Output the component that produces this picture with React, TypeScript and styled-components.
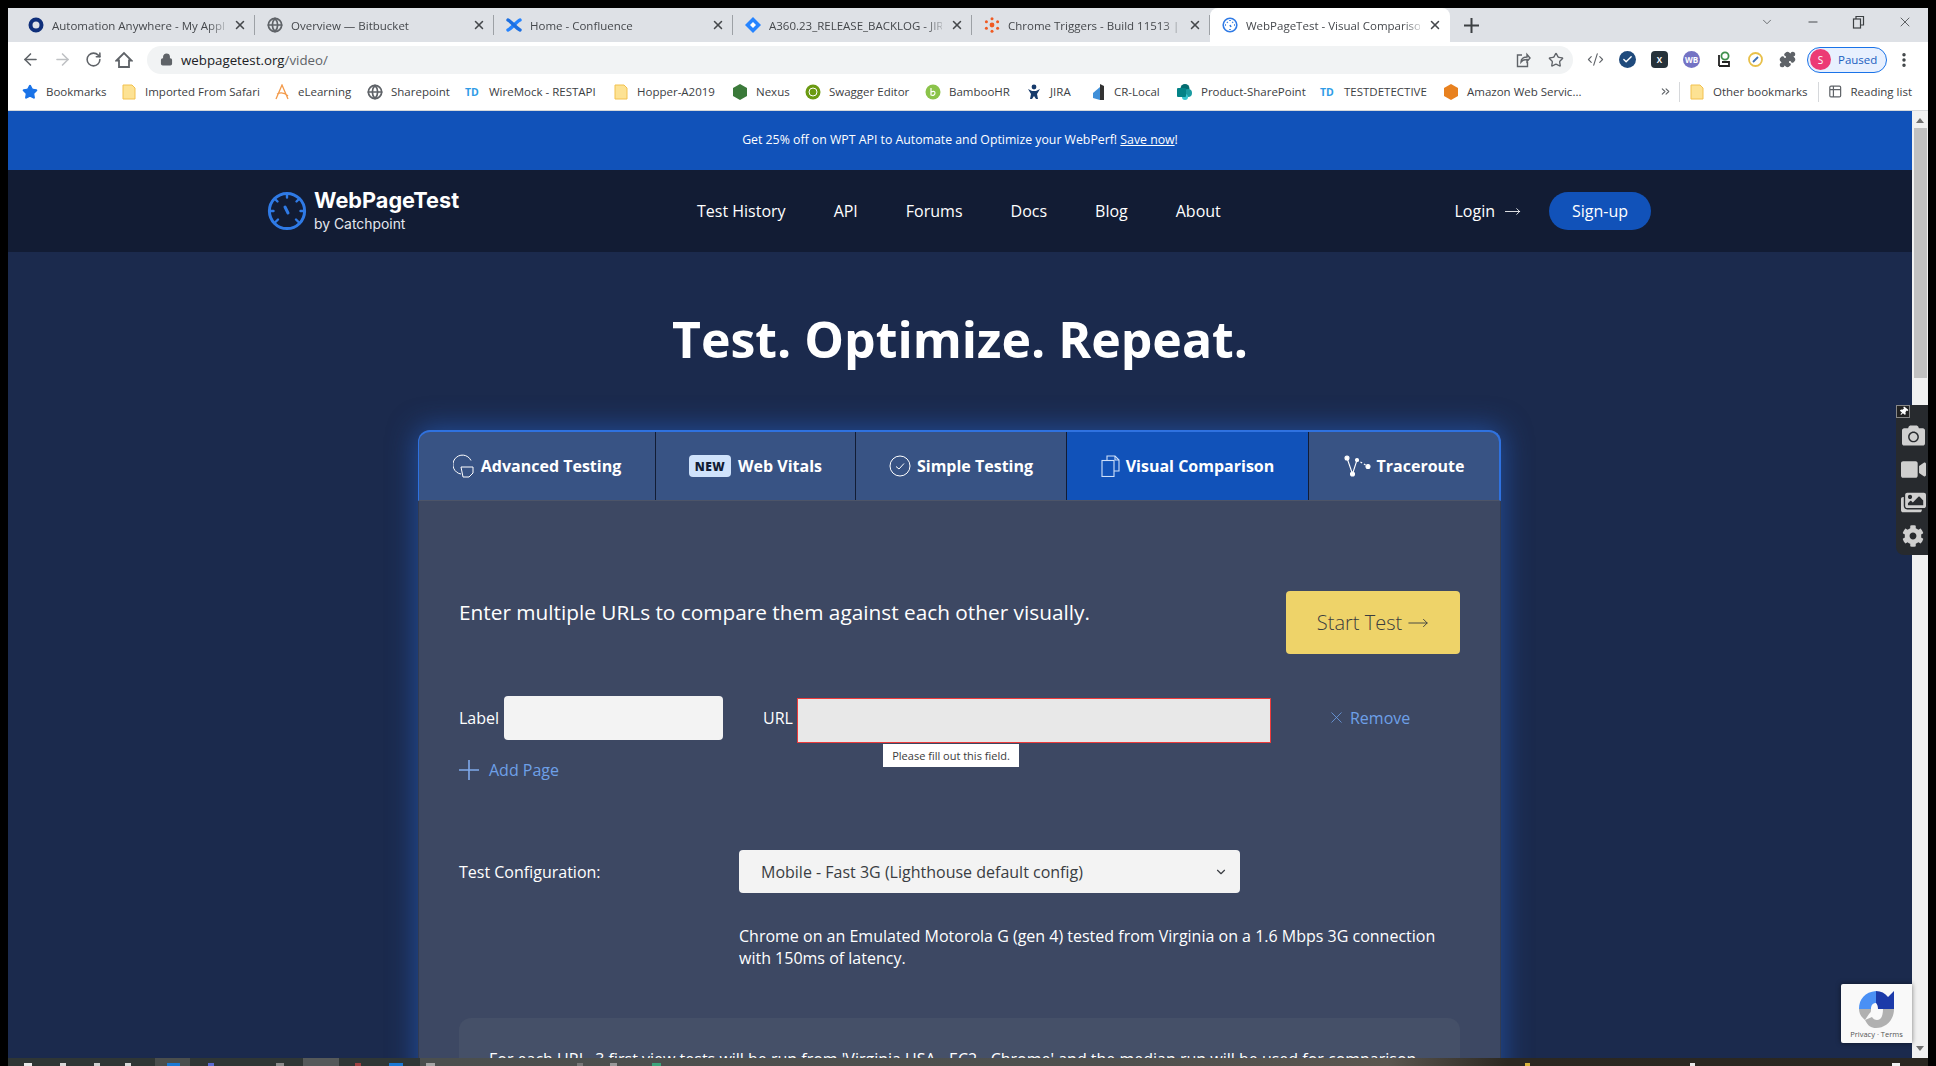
import * as React from 'react'
import styled, { createGlobalStyle } from 'styled-components'
import { ArrowLeft, ArrowRight, RotateCw, Lock, Star, CodeXml, Puzzle, MoreVertical, ChevronDown, Minus, X, Globe, Check, ChevronsRight, Table2, MoveRight } from 'lucide-react'
import { FaCamera, FaVideo, FaImages, FaCog, FaThumbtack } from 'react-icons/fa'

const GlobalStyle = createGlobalStyle`
  html, body { margin: 0; padding: 0; background: #000; }
  * { box-sizing: border-box; }
`

const Screen = styled.div`
  width: 1936px;
  height: 1066px;
  overflow: hidden;
  position: relative;
  background: #000;
  padding: 8px 8px 0;
  display: flex;
  flex-direction: column;
  font-family: 'Open Sans', sans-serif;
`

/* browser chrome */
const TabStrip = styled.div`
  height: 34px;
  flex: none;
  background: #dee1e6;
  display: flex;
  align-items: center;
  padding-left: 8px;
  position: relative;
`

const BrowserTab = styled.div<{ $active?: boolean; $w: number }>`
  width: ${p => p.$w}px;
  height: 34px;
  display: flex;
  align-items: center;
  padding: 0 8px 0 12px;
  gap: 8px;
  background: ${p => (p.$active ? '#fff' : 'transparent')};
  border-radius: ${p => (p.$active ? '8px 8px 0 0' : '0')};
  position: relative;
  &::after {
    content: '';
    display: ${p => (p.$active ? 'none' : 'block')};
    position: absolute;
    right: 0;
    top: 7px;
    bottom: 7px;
    width: 1px;
    background: #9da1a6;
  }
`

const TabTitle = styled.span`
  flex: 1;
  min-width: 0;
  font-size: 11.5px;
  color: #45484c;
  white-space: nowrap;
  overflow: hidden;
  -webkit-mask-image: linear-gradient(90deg, #000 90%, rgba(0, 0, 0, 0.25));
  mask-image: linear-gradient(90deg, #000 90%, rgba(0, 0, 0, 0.25));
`

const NewTab = styled.div`
  margin-left: 14px;
  display: flex;
  align-items: center;
  color: #3c4043;
`

const WindowControls = styled.div`
  margin-left: auto;
  height: 28px;
  align-self: flex-start;
  display: flex;
  align-items: center;
  gap: 32px;
  padding-right: 15px;
  color: #3c4043;
`

const Toolbar = styled.div`
  height: 35px;
  flex: none;
  background: #fff;
  display: flex;
  align-items: center;
  padding-left: 13px;
`

const NavIcons = styled.div`
  display: flex;
  align-items: center;
  gap: 13px;
  margin-right: 14px;
  color: #5f6368;
`

const Omnibox = styled.div`
  width: 1426px;
  height: 28px;
  flex: none;
  border-radius: 14px;
  background: #f1f3f4;
  display: flex;
  align-items: center;
  padding: 0 9px 0 13px;
  color: #5f6368;
`

const UrlText = styled.span`
  margin-left: 8px;
  font-size: 13.3px;
  color: #202124;
  flex: 1;
  span {
    color: #5f6368;
  }
`

const OmniActions = styled.div`
  display: flex;
  align-items: center;
  gap: 17px;
`

const Extensions = styled.div`
  display: flex;
  align-items: center;
  gap: 15px;
  margin-left: 14px;
  color: #5f6368;
`

const ExtBadge = styled.div<{ $bg: string; $round?: boolean }>`
  width: 17px;
  height: 17px;
  border-radius: ${p => (p.$round ? '50%' : '4px')};
  background: ${p => p.$bg};
  color: #fff;
  font-size: 8px;
  font-weight: 700;
  display: flex;
  align-items: center;
  justify-content: center;
`

const ProfilePill = styled.div`
  width: 80px;
  height: 26px;
  flex: none;
  margin-left: 11px;
  border: 1.5px solid #1a73e8;
  border-radius: 13px;
  background: #e8f0fe;
  display: flex;
  align-items: center;
  gap: 7px;
  padding-left: 2px;
  font-size: 11.5px;
  color: #1a5fc0;
`

const Avatar = styled.div`
  width: 21px;
  height: 21px;
  border-radius: 50%;
  background: #ec3a75;
  color: #fff;
  font-size: 10px;
  display: flex;
  align-items: center;
  justify-content: center;
`

const MenuDots = styled.div`
  margin-left: 8px;
  color: #3c4043;
  display: flex;
`

const BookmarksBar = styled.div`
  height: 34px;
  flex: none;
  background: #fff;
  border-bottom: 1px solid #d6d8db;
  display: flex;
  align-items: center;
  padding: 0 0 4px 14px;
  font-size: 11.5px;
  color: #3c4043;
`

const Bookmark = styled.div<{ $w: number }>`
  display: flex;
  align-items: center;
  gap: 8px;
  width: ${p => p.$w}px;
  flex: none;
  white-space: nowrap;
`

const BmSep = styled.div`
  width: 1px;
  height: 20px;
  flex: none;
  background: #d6d8db;
  margin: 0 9px 0 7px;
`

const FolderIcon = () => (
  <svg width="16" height="16" viewBox="0 0 16 16">
    <path d="M2 1h9l3 3v11H2z" fill="#fde293" stroke="#f2c14e" />
  </svg>
)

const TdMark = styled.span`
  width: 16px;
  font-size: 10.5px;
  font-weight: 700;
  color: #2f9be6;
`

/* page */
const Viewport = styled.div`
  flex: 1;
  min-height: 0;
  display: flex;
`

const Page = styled.div`
  flex: 1;
  min-width: 0;
  background: #1b2a4d;
  color: #fff;
  overflow: hidden;
`

const Scrollbar = styled.div`
  width: 16px;
  flex: none;
  background: #f1f1f1;
  display: flex;
  flex-direction: column;
  align-items: center;
  padding: 7px 0;
`

const ScrollArrow = styled.div<{ $down?: boolean }>`
  width: 0;
  height: 0;
  border-left: 4px solid transparent;
  border-right: 4px solid transparent;
  ${p => (p.$down ? 'border-top' : 'border-bottom')}: 5px solid #707070;
`

const ScrollThumb = styled.div`
  width: 13px;
  height: 250px;
  margin-top: 5px;
  background: #c1c1c1;
`

const ScrollSpacer = styled.div`
  flex: 1;
`

const Banner = styled.div`
  height: 59px;
  background: #1152b9;
  display: flex;
  align-items: center;
  justify-content: center;
  padding-bottom: 2px;
  font-size: 12.3px;
  a {
    color: #fff;
    text-decoration: underline;
  }
`

const NavBar = styled.div`
  height: 82px;
  background: #121c34;
  display: flex;
  align-items: center;
  padding: 0 261px 0 259px;
`

const Logo = styled.div`
  display: flex;
  align-items: center;
  gap: 7px;
  width: 430px;
`

const LogoText = styled.div`
  display: flex;
  flex-direction: column;
  line-height: 1;
`

const LogoTitle = styled.span`
  font-family: Inter, sans-serif;
  font-size: 21.7px;
  font-weight: 700;
`

const LogoSub = styled.span`
  font-family: Inter, sans-serif;
  font-size: 13.9px;
  margin-top: 6px;
  color: #e4e7ee;
`

const NavLinks = styled.div`
  display: flex;
  gap: 48px;
  font-size: 16px;
  flex: 1;
`

const LoginLink = styled.div`
  display: flex;
  align-items: center;
  gap: 9px;
  font-size: 16px;
  margin-right: 28px;
`

const SignUp = styled.div`
  width: 102px;
  height: 38px;
  border-radius: 19px;
  background: #1152b9;
  font-size: 16px;
  display: flex;
  align-items: center;
  justify-content: center;
`

const Hero = styled.h1`
  margin: 0;
  padding-top: 53px;
  height: 178px;
  text-align: center;
  font-size: 50px;
  line-height: 68px;
  font-weight: 700;
`

const Panel = styled.div`
  width: 1083px;
  margin-left: 410px;
  border-radius: 12px 12px 0 0;
  box-shadow: 0 0 28px 2px rgba(40, 105, 215, 0.55);
  background: #3d4863;
`

const TabRow = styled.div`
  height: 71px;
  display: grid;
  grid-template-columns: 237px 200px 211px 242px 1fr;
  border: 2px solid #2f72e0;
  border-bottom: 1px solid #4c5468;
  border-left-width: 1px;
  border-radius: 12px 12px 0 0;
  background: #385384;
  overflow: hidden;
`

const PanelTab = styled.div<{ $active?: boolean }>`
  display: flex;
  align-items: center;
  justify-content: center;
  gap: 6px;
  font-size: 16px;
  font-weight: 700;
  background: ${p => (p.$active ? '#1152b9' : 'transparent')};
  border-right: 1px solid #121c34;
  &:last-child {
    border-right: 0;
  }
`

const NewBadge = styled.span`
  background: #cfe2fb;
  color: #121c34;
  border-radius: 4px;
  font-size: 12px;
  font-weight: 800;
  letter-spacing: 0.5px;
  width: 42px;
  height: 22px;
  display: flex;
  align-items: center;
  justify-content: center;
  margin-right: 1px;
`

const PanelBody = styled.div`
  padding: 90px 40px 0;
  border-left: 1px solid #333c52;
  border-right: 1px solid #333c52;
`

const IntroRow = styled.div`
  display: flex;
  align-items: flex-start;
  justify-content: space-between;
  height: 63px;
  font-size: 20.8px;
  line-height: 28px;
`

const IntroText = styled.span`
  padding-top: 7px;
`

const StartButton = styled.div`
  width: 174px;
  height: 63px;
  border-radius: 4px;
  background: #eed369;
  color: #3a3d3f;
  font-size: 20px;
  font-weight: 300;
  display: flex;
  align-items: center;
  justify-content: center;
  gap: 5px;
`

const UrlRow = styled.div`
  display: flex;
  align-items: center;
  margin-top: 42px;
  height: 47px;
  font-size: 16px;
  position: relative;
`

const FieldLabel = styled.span<{ $ml?: number }>`
  margin-left: ${p => p.$ml ?? 0}px;
  margin-bottom: 4px;
`

const LabelInput = styled.input`
  width: 219px;
  height: 44px;
  margin: 0 0 3px 5px;
  border: 0;
  border-radius: 4px;
  background: #f3f3f3;
`

const UrlInput = styled.input`
  width: 474px;
  height: 45px;
  margin: 2px 0 0 4px;
  border: 1px solid #ed3b3b;
  background: #e8e8e8;
`

const Tooltip = styled.div`
  position: absolute;
  left: 424px;
  top: 48px;
  width: 136px;
  height: 23px;
  background: #fff;
  color: #3c3c3c;
  font-size: 11px;
  display: flex;
  align-items: center;
  justify-content: center;
`

const RemoveLink = styled.div`
  display: flex;
  align-items: center;
  gap: 4px;
  margin: 0 0 4px 56px;
  color: #6ea0e8;
`

const AddPage = styled.div`
  display: flex;
  align-items: center;
  gap: 10px;
  margin-top: 12px;
  font-size: 16px;
  color: #6ea0e8;
  height: 30px;
`

const ConfigRow = styled.div`
  display: flex;
  align-items: center;
  margin-top: 65px;
  font-size: 16px;
`

const ConfigLabel = styled.span`
  width: 280px;
`

const SelectBox = styled.div`
  width: 501px;
  height: 43px;
  background: #f3f3f3;
  border-radius: 4px;
  color: #3a3d42;
  display: flex;
  align-items: center;
  justify-content: space-between;
  padding: 0 12px 0 22px;
`

const Description = styled.p`
  margin: 32px 0 0 280px;
  font-size: 16px;
  line-height: 22px;
  width: 720px;
`

const NoteBox = styled.div`
  margin-top: 49px;
  height: 120px;
  background: #455068;
  border-radius: 12px;
  padding: 30px 30px;
  font-size: 16px;
  line-height: 22px;
`

const Taskbar = styled.div`
  height: 8px;
  flex: none;
  display: flex;
  align-items: flex-start;
  background: linear-gradient(
    90deg,
    #2f3635 0 147px,
    #4a4e4d 147px 182px,
    #2f3635 182px 295px,
    #55595a 295px 331px,
    #2f3635 331px 412px,
    #4b4f4e 412px,
    #4e504e 1100px,
    #5a564f 1380px,
    #2c2821 1500px,
    #2a2721 100%
  );
`

const TaskDot = styled.div<{ $c: string; $ml: number; $w: number }>`
  width: ${p => p.$w}px;
  height: 3px;
  flex: none;
  margin-top: 5px;
  margin-left: ${p => p.$ml}px;
  background: ${p => p.$c};
`

/* overlays */
const ExtPanel = styled.div`
  position: absolute;
  left: 1896px;
  top: 405px;
  width: 32px;
  height: 150px;
  background: #272a2e;
  border-radius: 8px 0 0 8px;
  display: flex;
  flex-direction: column;
  align-items: center;
  padding: 14px 0 0 2px;
  color: #cfcfcf;
`

const ExtRow = styled.div`
  height: 33.5px;
  display: flex;
  align-items: center;
  justify-content: center;
`

const PinBox = styled.div`
  position: absolute;
  left: 0;
  top: 0;
  width: 14px;
  height: 13px;
  background: #222;
  border: 1px solid #888;
  color: #fff;
  display: flex;
  align-items: center;
  justify-content: center;
  svg {
    transform: rotate(40deg);
  }
`

const Recaptcha = styled.div`
  position: absolute;
  left: 1841px;
  top: 984px;
  width: 71px;
  height: 59px;
  background: #f9f9f9;
  border-radius: 2px 0 0 2px;
  box-shadow: 0 0 5px rgba(0, 0, 0, 0.5);
  display: flex;
  flex-direction: column;
  align-items: center;
  padding-top: 6px;
  font-size: 7.5px;
  color: #555;
`

const RecaptchaText = styled.span`
  white-space: nowrap;
  margin-top: 1px;
`

const Favicon = ({ kind }: { kind: string }) => {
  switch (kind) {
    case 'ring':
      return (
        <svg width="16" height="16" viewBox="0 0 16 16">
          <circle cx="8" cy="8" r="5.5" fill="none" stroke="#0f2f7a" strokeWidth="4" />
        </svg>
      )
    case 'globe':
      return <Globe size={16} color="#5f6368" strokeWidth={2.6} />
    case 'conf':
      return (
        <svg width="16" height="16" viewBox="0 0 16 16" fill="none" stroke="#2684ff" strokeWidth="3.4" strokeLinecap="round">
          <path d="M2 13c2-1 3-2 6-5s4-4 6-5" />
          <path d="M2 3c2 1 3 2 6 5s4 4 6 5" stroke="#1d6fe0" />
        </svg>
      )
    case 'jira':
      return (
        <svg width="16" height="16" viewBox="0 0 16 16">
          <path d="M8 0l8 8-8 8-8-8z" fill="#2684ff" />
          <path d="M8 5l3 3-3 3-3-3z" fill="#fff" />
        </svg>
      )
    case 'hub':
      return (
        <svg width="16" height="16" viewBox="0 0 16 16" fill="#f05a22">
          <circle cx="8" cy="8" r="2.4" />
          <circle cx="8" cy="1.8" r="1.5" />
          <circle cx="8" cy="14.2" r="1.5" />
          <circle cx="2.4" cy="4.8" r="1.5" />
          <circle cx="13.6" cy="4.8" r="1.5" />
          <circle cx="2.4" cy="11.2" r="1.5" />
          <circle cx="13.6" cy="11.2" r="1.5" />
        </svg>
      )
    default:
      return (
        <svg width="16" height="16" viewBox="0 0 16 16" fill="none" stroke="#2f7ae5" strokeWidth="1.6">
          <circle cx="8" cy="8" r="6.8" />
          <path d="M8 3v1M8 12v1M3 8h1M12 8h1M5 5l.7.7M11 5l-.7.7M8 8l1 2" />
        </svg>
      )
  }
}

const browserTabs = [
  { icon: 'ring', title: 'Automation Anywhere - My Appl', w: 239 },
  { icon: 'globe', title: 'Overview — Bitbucket', w: 239 },
  { icon: 'conf', title: 'Home - Confluence', w: 239 },
  { icon: 'jira', title: 'A360.23_RELEASE_BACKLOG - JIR', w: 239 },
  { icon: 'hub', title: 'Chrome Triggers - Build 11513 |', w: 238 }
]

const taskDots = [
  { x: 24, w: 8, c: '#e8e8e8' },
  { x: 60, w: 6, c: '#d8d8d8' },
  { x: 94, w: 6, c: '#cfcfcf' },
  { x: 125, w: 6, c: '#d8d8d8' },
  { x: 167, w: 13, c: '#1a78d4' },
  { x: 208, w: 6, c: '#5a6ad0' },
  { x: 276, w: 8, c: '#8a8a8a' },
  { x: 355, w: 6, c: '#a04040' },
  { x: 389, w: 14, c: '#1a78d4' },
  { x: 426, w: 9, c: '#a5a5a5' },
  { x: 577, w: 6, c: '#777' },
  { x: 610, w: 7, c: '#999' },
  { x: 652, w: 9, c: '#3ca37a' },
  { x: 1525, w: 5, c: '#d8b23a' },
  { x: 1690, w: 5, c: '#e8e8e8' },
  { x: 1892, w: 8, c: '#f0f0f0' }
]

const Hexagon = ({ color }: { color: string }) => (
  <svg width="16" height="16" viewBox="0 0 16 16">
    <path d="M8 0l7 4v8l-7 4-7-4V4z" fill={color} />
  </svg>
)

const HomeIcon = () => (
  <svg width="18" height="18" viewBox="0 0 18 18" fill="none" stroke="currentColor" strokeWidth="1.8">
    <path d="M1.5 9.5L9 2l7.5 7.5H14V16H4V9.5z" />
  </svg>
)

const ShareIcon = () => (
  <svg width="16" height="16" viewBox="0 0 16 16" fill="none" stroke="currentColor" strokeWidth="1.4">
    <path d="M7 3H2.5v11.5h10V10" />
    <path d="M6 10c0-3 2.500-5 6-5V2.500l3 3.500-3 3.500V7.500c-3 0-5 1-6 2.500z" />
  </svg>
)

const RestoreIcon = () => (
  <svg width="13" height="14" viewBox="0 0 13 14" fill="none" stroke="currentColor" strokeWidth="1.2">
    <rect x="1.500" y="4" width="7" height="9" />
    <path d="M4 4V1.500h7.500V10H8.500" />
  </svg>
)

const PlusIcon = ({ size, color, weight }: { size: number; color: string; weight: number }) => (
  <svg width={size} height={size} viewBox={`0 0 ${size} ${size}`} stroke={color} strokeWidth={weight}>
    <path d={`M${size / 2} 0V${size}M0 ${size / 2}H${size}`} />
  </svg>
)

const LogoMark = () => (
  <svg width="40" height="40" viewBox="0 0 40 40" fill="none" stroke="#2f7ae5" strokeWidth="3" strokeLinecap="round">
    <circle cx="20" cy="20" r="17.6" />
    <path d="M20 3v3.500M8 8l2.500 2.500M32 8l-2.500 2.500M3 20h3.500M33.500 20H37M8.500 31l2.500-2.500M31.500 31L29 28.500" strokeWidth="2.4" />
    <path d="M18 16l3 6" />
  </svg>
)

const AdvancedIcon = () => (
  <svg width="22" height="24" viewBox="0 0 22 24" fill="none" stroke="#fff" strokeWidth="1">
    <path d="M18 6.500A9.500 9.500 0 1 0 8 20" />
    <path d="M8 13h12v6l-4 4H10z" />
  </svg>
)

const SimpleIcon = () => (
  <svg width="22" height="22" viewBox="0 0 22 22" fill="none" stroke="#fff" strokeWidth="1">
    <circle cx="11" cy="11" r="10" />
    <path d="M7 11.500l3 2.500 5-5.500" />
  </svg>
)

const VisualIcon = () => (
  <svg width="19" height="22" viewBox="0 0 19 22" fill="none" stroke="#cfe0fa" strokeWidth="1.1">
    <path d="M6 5V1h8l4 4v11h-5" />
    <path d="M14 1v4h4" />
    <rect x="1" y="5.500" width="12" height="16" />
  </svg>
)

const TracerouteIcon = () => (
  <svg width="27" height="22" viewBox="0 0 27 22" fill="#fff" stroke="#fff" strokeWidth="1.1">
    <circle cx="3" cy="3" r="2" />
    <circle cx="8.500" cy="19" r="2" />
    <circle cx="13" cy="5" r="1.500" />
    <circle cx="24" cy="11.500" r="2" />
    <path d="M3 3l5.500 16L13 5" fill="none" />
    <path d="M13 5l11 6.500" fill="none" strokeDasharray="2 2" />
  </svg>
)

const RecaptchaLogo = () => (
  <svg width="37" height="38" viewBox="0 0 37 38">
    <path d="M1 19C1 9 7 2 18 1v12c-3 0-5 2-5 6z" fill="#4a90f5" />
    <path d="M18 1c5 0 9 2 12 6l6-6v18H20c0-3-1-5-2-6z" fill="#1c3aa9" />
    <path d="M1 19h12c0 3 0 3-2 5l-4 6C3 27 1 23 1 19z" fill="#b0b0b0" />
    <path d="M36 19c0 11-8 19-18 19-5 0-8-2-11-8l7-3c1 2 3 3 5 3 4 0 6-4 6-11z" fill="#b0b0b0" />
  </svg>
)

const App = () => (
  <>
    <GlobalStyle />
    <Screen>
      <TabStrip>
        {browserTabs.map(t => (
          <BrowserTab key={t.title} $w={t.w}>
            <Favicon kind={t.icon} />
            <TabTitle>{t.title}</TabTitle>
            <X size={14} color="#45484c" strokeWidth={2.6} />
          </BrowserTab>
        ))}
        <BrowserTab $active $w={240}>
          <Favicon kind="wpt" />
          <TabTitle>WebPageTest - Visual Compariso</TabTitle>
          <X size={14} color="#45484c" strokeWidth={2.6} />
        </BrowserTab>
        <NewTab>
          <PlusIcon size={15} color="#3c4043" weight={2} />
        </NewTab>
        <WindowControls>
          <ChevronDown size={14} strokeWidth={1.2} />
          <Minus size={14} strokeWidth={1.6} />
          <RestoreIcon />
          <X size={16} strokeWidth={1.2} />
        </WindowControls>
      </TabStrip>

      <Toolbar>
        <NavIcons>
          <ArrowLeft size={19} strokeWidth={2} />
          <ArrowRight size={19} strokeWidth={2} color="#bfc1c4" />
          <RotateCw size={17} strokeWidth={2.2} />
          <HomeIcon />
        </NavIcons>
        <Omnibox>
          <Lock size={13} strokeWidth={2.6} fill="#5f6368" />
          <UrlText>
            webpagetest.org<span>/video/</span>
          </UrlText>
          <OmniActions>
            <ShareIcon />
            <Star size={16} />
          </OmniActions>
        </Omnibox>
        <Extensions>
          <CodeXml size={17} strokeWidth={1.6} />
          <ExtBadge $bg="#1f4a7c" $round>
            <Check size={11} strokeWidth={3} />
          </ExtBadge>
          <ExtBadge $bg="#26323a">X</ExtBadge>
          <ExtBadge $bg="#7473c4" $round>
            WB
          </ExtBadge>
          <svg width="17" height="17" viewBox="0 0 17 17" fill="none" strokeWidth="1.8">
            <circle cx="10" cy="5" r="3.600" stroke="#3f8f4c" />
            <path d="M4 15V4M4 15h10v-4H7" stroke="#222" />
          </svg>
          <svg width="17" height="17" viewBox="0 0 17 17" fill="none" strokeWidth="1.800">
            <circle cx="8.500" cy="8.500" r="6.500" stroke="#e8c04a" />
            <path d="M6 11l5-5" stroke="#3c6fb5" />
          </svg>
          <Puzzle size={17} fill="#5f6368" />
        </Extensions>
        <ProfilePill>
          <Avatar>S</Avatar>
          Paused
        </ProfilePill>
        <MenuDots>
          <MoreVertical size={18} strokeWidth={2.6} />
        </MenuDots>
      </Toolbar>

      <BookmarksBar>
        <Bookmark $w={99}>
          <Star size={16} color="#1a73e8" fill="#1a73e8" />
          Bookmarks
        </Bookmark>
        <Bookmark $w={153}>
          <FolderIcon />
          Imported From Safari
        </Bookmark>
        <Bookmark $w={93}>
          <svg width="16" height="16" viewBox="0 0 16 16" fill="none" stroke="#f39a4a" strokeWidth="1.3">
            <path d="M2 15L8 1l6 14M3 10c4-2 8-1 11 2" />
          </svg>
          eLearning
        </Bookmark>
        <Bookmark $w={98}>
          <Globe size={16} color="#5f6368" strokeWidth={2.6} />
          Sharepoint
        </Bookmark>
        <Bookmark $w={148}>
          <TdMark>TD</TdMark>
          WireMock - RESTAPI
        </Bookmark>
        <Bookmark $w={119}>
          <FolderIcon />
          Hopper-A2019
        </Bookmark>
        <Bookmark $w={73}>
          <Hexagon color="#3b7a3a" />
          Nexus
        </Bookmark>
        <Bookmark $w={120}>
          <svg width="16" height="16" viewBox="0 0 16 16">
            <circle cx="8" cy="8" r="7.500" fill="#6b9a12" />
            <circle cx="8" cy="8" r="4" fill="none" stroke="#fff" strokeWidth="1" />
          </svg>
          Swagger Editor
        </Bookmark>
        <Bookmark $w={101}>
          <svg width="16" height="16" viewBox="0 0 16 16">
            <circle cx="8" cy="8" r="7.500" fill="#8bc34a" />
            <path d="M6 4v7c2 1 4 0 4-2S8 7 6 8" fill="none" stroke="#fff" strokeWidth="1.2" />
          </svg>
          BambooHR
        </Bookmark>
        <Bookmark $w={64}>
          <svg width="16" height="16" viewBox="0 0 16 16" fill="#163a6b">
            <circle cx="8" cy="3" r="2.400" />
            <path d="M2 5l4 2h4l4-2-3 5 1 5h-2l-2-3-2 3H4l1-5z" />
          </svg>
          JIRA
        </Bookmark>
        <Bookmark $w={87}>
          <svg width="16" height="16" viewBox="0 0 16 16">
            <path d="M10 0l4 2v14h-4z" fill="#333" />
            <path d="M10 3L3 9v5l7 2z" fill="#3f8fd8" />
          </svg>
          CR-Local
        </Bookmark>
        <Bookmark $w={143}>
          <svg width="16" height="16" viewBox="0 0 16 16">
            <circle cx="8" cy="4.500" r="4.500" fill="#036c70" />
            <circle cx="11" cy="9" r="4" fill="#1a9ba1" />
            <circle cx="8" cy="13" r="3" fill="#37c6d0" />
            <rect x="0" y="4" width="9" height="9" rx="1" fill="#038387" />
          </svg>
          Product-SharePoint
        </Bookmark>
        <Bookmark $w={123}>
          <TdMark>TD</TdMark>
          TESTDETECTIVE
        </Bookmark>
        <Bookmark $w={216}>
          <Hexagon color="#e8811f" />
          Amazon Web Servic...
        </Bookmark>
        <ChevronsRight size={13} color="#5f6368" />
        <BmSep />
        <Bookmark $w={122}>
          <FolderIcon />
          Other bookmarks
        </Bookmark>
        <BmSep />
        <Bookmark $w={84}>
          <Table2 size={15} color="#5f6368" />
          Reading list
        </Bookmark>
      </BookmarksBar>

      <Viewport>
        <Page>
          <Banner>
            <span>
              Get 25% off on WPT API to Automate and Optimize your WebPerf! <a>Save now</a>!
            </span>
          </Banner>
          <NavBar>
            <Logo>
              <LogoMark />
              <LogoText>
                <LogoTitle>WebPageTest</LogoTitle>
                <LogoSub>by Catchpoint</LogoSub>
              </LogoText>
            </Logo>
            <NavLinks>
              <span>Test History</span>
              <span>API</span>
              <span>Forums</span>
              <span>Docs</span>
              <span>Blog</span>
              <span>About</span>
            </NavLinks>
            <LoginLink>
              Login <MoveRight size={17} strokeWidth={1.2} />
            </LoginLink>
            <SignUp>Sign-up</SignUp>
          </NavBar>

          <Hero>Test. Optimize. Repeat.</Hero>

          <Panel>
            <TabRow>
              <PanelTab>
                <AdvancedIcon />
                Advanced Testing
              </PanelTab>
              <PanelTab>
                <NewBadge>NEW</NewBadge>
                Web Vitals
              </PanelTab>
              <PanelTab>
                <SimpleIcon />
                Simple Testing
              </PanelTab>
              <PanelTab $active>
                <VisualIcon />
                Visual Comparison
              </PanelTab>
              <PanelTab>
                <TracerouteIcon />
                Traceroute
              </PanelTab>
            </TabRow>
            <PanelBody>
              <IntroRow>
                <IntroText>Enter multiple URLs to compare them against each other visually.</IntroText>
                <StartButton>
                  Start Test
                  <MoveRight size={22} strokeWidth={1} />
                </StartButton>
              </IntroRow>
              <UrlRow>
                <FieldLabel>Label</FieldLabel>
                <LabelInput />
                <FieldLabel $ml={40}>URL</FieldLabel>
                <UrlInput />
                <RemoveLink>
                  <X size={19} strokeWidth={1} />
                  Remove
                </RemoveLink>
                <Tooltip>Please fill out this field.</Tooltip>
              </UrlRow>
              <AddPage>
                <PlusIcon size={20} color="#7fa9ea" weight={1.6} />
                Add Page
              </AddPage>
              <ConfigRow>
                <ConfigLabel>Test Configuration:</ConfigLabel>
                <SelectBox>
                  Mobile - Fast 3G (Lighthouse default config)
                  <ChevronDown size={14} strokeWidth={2} />
                </SelectBox>
              </ConfigRow>
              <Description>
                Chrome on an Emulated Motorola G (gen 4) tested from Virginia on a 1.6 Mbps 3G connection with 150ms of
                latency.
              </Description>
              <NoteBox>
                For each URL, 3 first view tests will be run from 'Virginia USA - EC2 - Chrome' and the median run will be
                used for comparison.
              </NoteBox>
            </PanelBody>
          </Panel>
        </Page>
        <Scrollbar>
          <ScrollArrow />
          <ScrollThumb />
          <ScrollSpacer />
          <ScrollArrow $down />
        </Scrollbar>
      </Viewport>

      <Taskbar>
        {taskDots.map((d, i) => (
          <TaskDot key={d.x} $c={d.c} $w={d.w} $ml={d.x - (i ? taskDots[i - 1].x + taskDots[i - 1].w : 8)} />
        ))}
      </Taskbar>

      <ExtPanel>
        <PinBox>
          <FaThumbtack size={9} />
        </PinBox>
        <ExtRow>
          <FaCamera size={23} />
        </ExtRow>
        <ExtRow>
          <FaVideo size={25} />
        </ExtRow>
        <ExtRow>
          <FaImages size={25} />
        </ExtRow>
        <ExtRow>
          <FaCog size={22} />
        </ExtRow>
      </ExtPanel>

      <Recaptcha>
        <RecaptchaLogo />
        <RecaptchaText>Privacy · Terms</RecaptchaText>
      </Recaptcha>
    </Screen>
  </>
)

export default App
